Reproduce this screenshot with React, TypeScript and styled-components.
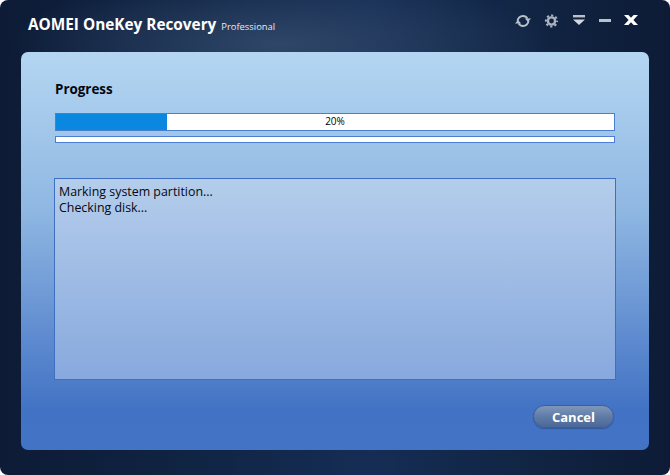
import styled, { createGlobalStyle } from "styled-components";

const GlobalStyle = createGlobalStyle`
  html, body {
    margin: 0;
    padding: 0;
    background: #fff;
  }
  body {
    font-family: "Open Sans", sans-serif;
  }
`;

const App = () => {
  return (
    <Window>
      <GlobalStyle />
      <TitleBar>
        <AppName>AOMEI OneKey Recovery</AppName>
        <Edition>Professional</Edition>
        <Controls>
          <svg width="16" height="12" viewBox="0 0 16 12" fill="none">
            <path d="M2.6 6A5.4 5 0 0 1 8 1c2 0 3.6 1 4.4 2.6" stroke="#b9c1cc" strokeWidth="1.9" />
            <path d="M13.4 6A5.4 5 0 0 1 8 11c-2 0-3.6-1-4.4-2.6" stroke="#b9c1cc" strokeWidth="1.9" />
            <path d="M9.8 3.4H16L13 7z" fill="#b9c1cc" />
            <path d="M6.2 8.6H0L3 5z" fill="#b9c1cc" />
          </svg>
          <svg width="15" height="14" viewBox="0 0 15 14" fill="none">
            <circle cx="7.5" cy="7" r="3.6" stroke="#aab2bf" strokeWidth="2.4" />
            <circle cx="7.5" cy="7" r="5.6" stroke="#aab2bf" strokeWidth="2" strokeDasharray="2.2 2.2" strokeDashoffset="1.1" />
          </svg>
          <svg width="14" height="12" viewBox="0 0 14 12">
            <rect x="1" y="0" width="12" height="2.4" fill="#b9c1cc" />
            <path d="M1 4.4h12L7 10z" fill="#d3d8df" />
          </svg>
          <MinimizeBar />
          <svg width="14" height="12" viewBox="0 0 14 12">
            <path d="M0 0h4.4L7 2.8 9.6 0H14L9.4 4.9 14 10H9.6L7 7.2 4.4 10H0l4.6-5.1z" fill="#fff" />
          </svg>
        </Controls>
      </TitleBar>
      <Panel>
        <SectionLabel>Progress</SectionLabel>
        <MainBar>
          <BarFill style={{ width: "19.9%" }} />
          <BarText>20%</BarText>
        </MainBar>
        <ThinBar />
        <LogBox>
          <div>Marking system partition...</div>
          <div>Checking disk...</div>
        </LogBox>
        <Footer>
          <CancelButton>Cancel</CancelButton>
        </Footer>
      </Panel>
    </Window>
  );
};

const Window = styled.div`
  width: 670px;
  height: 475px;
  box-sizing: border-box;
  padding: 0 21px 25px;
  display: flex;
  flex-direction: column;
  border-radius: 8px;
  overflow: hidden;
  background:
    radial-gradient(ellipse 270px 70px at 42% 44px, #2f4668 0%, rgba(47, 70, 104, 0) 100%),
    linear-gradient(90deg, #0d1b36 0%, #102443 28%, #152d55 55%, #112544 78%, #0d1b36 100%);
`;

const TitleBar = styled.div`
  height: 52px;
  flex: none;
  display: flex;
  align-items: flex-start;
  padding-left: 7px;
  color: #fff;
`;

const AppName = styled.span`
  margin-top: 14px;
  font-weight: 700;
  font-size: 15.35px;
  line-height: 20px;
  white-space: nowrap;
`;

const Edition = styled.span`
  margin: 20px 0 0 5px;
  font-size: 9.4px;
  line-height: 14px;
  color: #e6eaf0;
`;

const Controls = styled.div`
  margin: 14px 11px 0 auto;
  height: 14px;
  display: flex;
  align-items: center;
  gap: 13px;
`;

const MinimizeBar = styled.span`
  width: 12px;
  height: 3px;
  margin-bottom: 1px;
  background: #b9c1cc;
`;

const Panel = styled.div`
  flex: 1;
  box-sizing: border-box;
  padding: 28px 33px 21px;
  display: flex;
  flex-direction: column;
  border-radius: 7px;
  background: linear-gradient(180deg, #b4d6f2 0%, #8fb7e2 40%, #4272c4 90%, #4274c6 100%);
`;

const SectionLabel = styled.div`
  font-weight: 700;
  font-size: 13.4px;
  line-height: 18px;
  color: #05080e;
  margin: 0 1px 15px;
`;

const MainBar = styled.div`
  position: relative;
  box-sizing: border-box;
  width: 560px;
  height: 18px;
  margin-left: 1px;
  background: #fff;
  border: 1px solid #4a7fd0;
`;

const BarFill = styled.div`
  height: 100%;
  background: #0a88e0;
`;

const BarText = styled.span`
  position: absolute;
  inset: 0;
  text-align: center;
  font-size: 10px;
  line-height: 15px;
  color: #000;
`;

const ThinBar = styled.div`
  box-sizing: border-box;
  width: 560px;
  height: 7px;
  margin: 5px 0 35px 1px;
  background: #fff;
  border: 1px solid #4a7fd0;
`;

const LogBox = styled.div`
  box-sizing: border-box;
  width: 562px;
  height: 202px;
  padding: 5px 4px;
  border: 1px solid #3f6fc0;
  background: linear-gradient(180deg, #b4cdeb 0%, #88a9de 100%);
  font-size: 12.4px;
  line-height: 16px;
  color: #05080e;
`;

const Footer = styled.div`
  display: flex;
  justify-content: flex-end;
  margin-top: 25px;
  padding-right: 2px;
`;

const CancelButton = styled.button`
  box-sizing: border-box;
  width: 81px;
  height: 23px;
  padding: 0;
  border: 1px solid #3d5f98;
  border-radius: 12px;
  background: linear-gradient(180deg, #8097b9 0%, #5f7ca8 50%, #4a6898 100%);
  box-shadow: 0 1px 1px rgba(30, 50, 100, 0.4);
  color: #fff;
  font-family: "Open Sans", sans-serif;
  font-weight: 700;
  font-size: 13px;
  line-height: 20px;
`;

export default App;
